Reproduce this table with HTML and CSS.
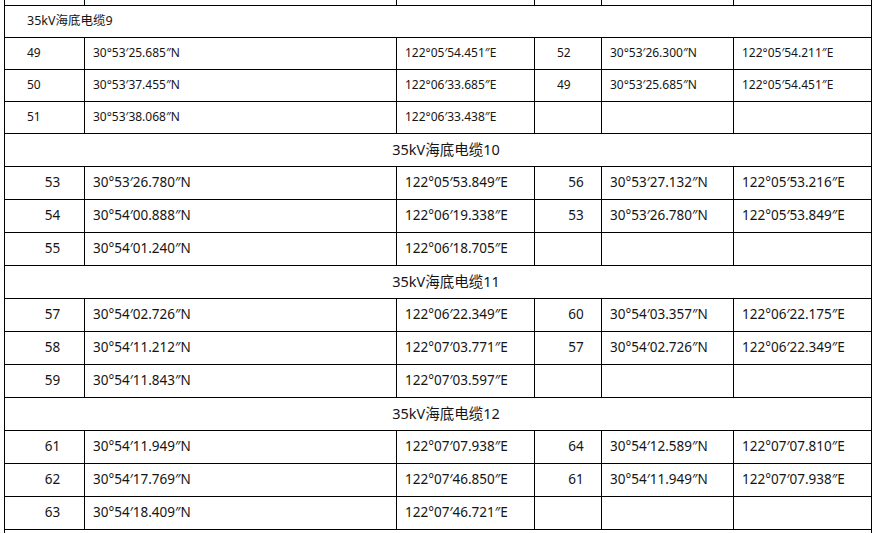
FILE: index.html
```html
<!DOCTYPE html>
<html lang="zh-CN">
<head>
<meta charset="utf-8">
<title>35kV海底电缆坐标</title>
<link rel="stylesheet" href="styles.css">
</head>
<body>
<table class="grid">
  <colgroup>
    <col class="c-no"><col class="c-lat"><col class="c-lon"><col class="c-no2"><col class="c-lat2"><col class="c-lon2">
  </colgroup>
  <tbody>
    <tr class="stub"><td></td><td></td><td></td><td></td><td></td><td></td></tr>

    <tr class="small"><td colspan="6" class="head head-left">35kV海底电缆9</td></tr>
    <tr class="small"><td class="no-left">49</td><td>30°53′25.685″N</td><td>122°05′54.451″E</td><td class="no-left">52</td><td>30°53′26.300″N</td><td>122°05′54.211″E</td></tr>
    <tr class="small"><td class="no-left">50</td><td>30°53′37.455″N</td><td>122°06′33.685″E</td><td class="no-left">49</td><td>30°53′25.685″N</td><td>122°05′54.451″E</td></tr>
    <tr class="small"><td class="no-left">51</td><td>30°53′38.068″N</td><td>122°06′33.438″E</td><td></td><td></td><td></td></tr>

    <tr><td colspan="6" class="head">35kV海底电缆10</td></tr>
    <tr><td class="no">53</td><td>30°53′26.780″N</td><td>122°05′53.849″E</td><td class="no">56</td><td>30°53′27.132″N</td><td>122°05′53.216″E</td></tr>
    <tr><td class="no">54</td><td>30°54′00.888″N</td><td>122°06′19.338″E</td><td class="no">53</td><td>30°53′26.780″N</td><td>122°05′53.849″E</td></tr>
    <tr><td class="no">55</td><td>30°54′01.240″N</td><td>122°06′18.705″E</td><td></td><td></td><td></td></tr>

    <tr><td colspan="6" class="head">35kV海底电缆11</td></tr>
    <tr><td class="no">57</td><td>30°54′02.726″N</td><td>122°06′22.349″E</td><td class="no">60</td><td>30°54′03.357″N</td><td>122°06′22.175″E</td></tr>
    <tr><td class="no">58</td><td>30°54′11.212″N</td><td>122°07′03.771″E</td><td class="no">57</td><td>30°54′02.726″N</td><td>122°06′22.349″E</td></tr>
    <tr><td class="no">59</td><td>30°54′11.843″N</td><td>122°07′03.597″E</td><td></td><td></td><td></td></tr>

    <tr><td colspan="6" class="head">35kV海底电缆12</td></tr>
    <tr><td class="no">61</td><td>30°54′11.949″N</td><td>122°07′07.938″E</td><td class="no">64</td><td>30°54′12.589″N</td><td>122°07′07.810″E</td></tr>
    <tr><td class="no">62</td><td>30°54′17.769″N</td><td>122°07′46.850″E</td><td class="no">61</td><td>30°54′11.949″N</td><td>122°07′07.938″E</td></tr>
    <tr><td class="no">63</td><td>30°54′18.409″N</td><td>122°07′46.721″E</td><td></td><td></td><td></td></tr>
    <tr class="stub-end"><td colspan="6"></td></tr>
  </tbody>
</table>
</body>
</html>
```

FILE: styles.css
```css
html, body {
  margin: 0;
  padding: 0;
  background: #ffffff;
}

body {
  padding-left: 4px;
  overflow: hidden;
  height: 533px;
}

.grid {
  border-collapse: collapse;
  table-layout: fixed;
  width: 868px;
  font-family: "Noto Sans", "Noto Sans CJK SC", sans-serif;
  font-size: 13.5px;
  color: #151515;
}

.c-no { width: 80px; }
.c-lat { width: 312px; }
.c-lon { width: 138px; }
.c-no2 { width: 67px; }
.c-lat2 { width: 132px; }
.c-lon2 { width: 138px; }

.grid td {
  border: 1px solid #000;
  height: 33px;
  padding: 0 0 0 8px;
  box-sizing: border-box;
  vertical-align: middle;
  white-space: nowrap;
  line-height: 1;
}

.grid tr.stub td {
  height: 5px;
  border-top: none;
  padding: 0;
}

.grid tr.small td {
  font-size: 12px;
  height: 32px;
}

.grid td.head {
  text-align: center;
  padding-left: 16px;
  font-size: 14.5px;
}

.grid tr.small td.head-left {
  text-align: left;
  padding-left: 22px;
  font-size: 12.5px;
}

.grid td.no {
  text-align: center;
  padding-left: 16px;
}

.grid td.no-left {
  padding-left: 22px;
}

.grid tr.stub-end td {
  height: 10px;
  border-bottom: none;
}
```
